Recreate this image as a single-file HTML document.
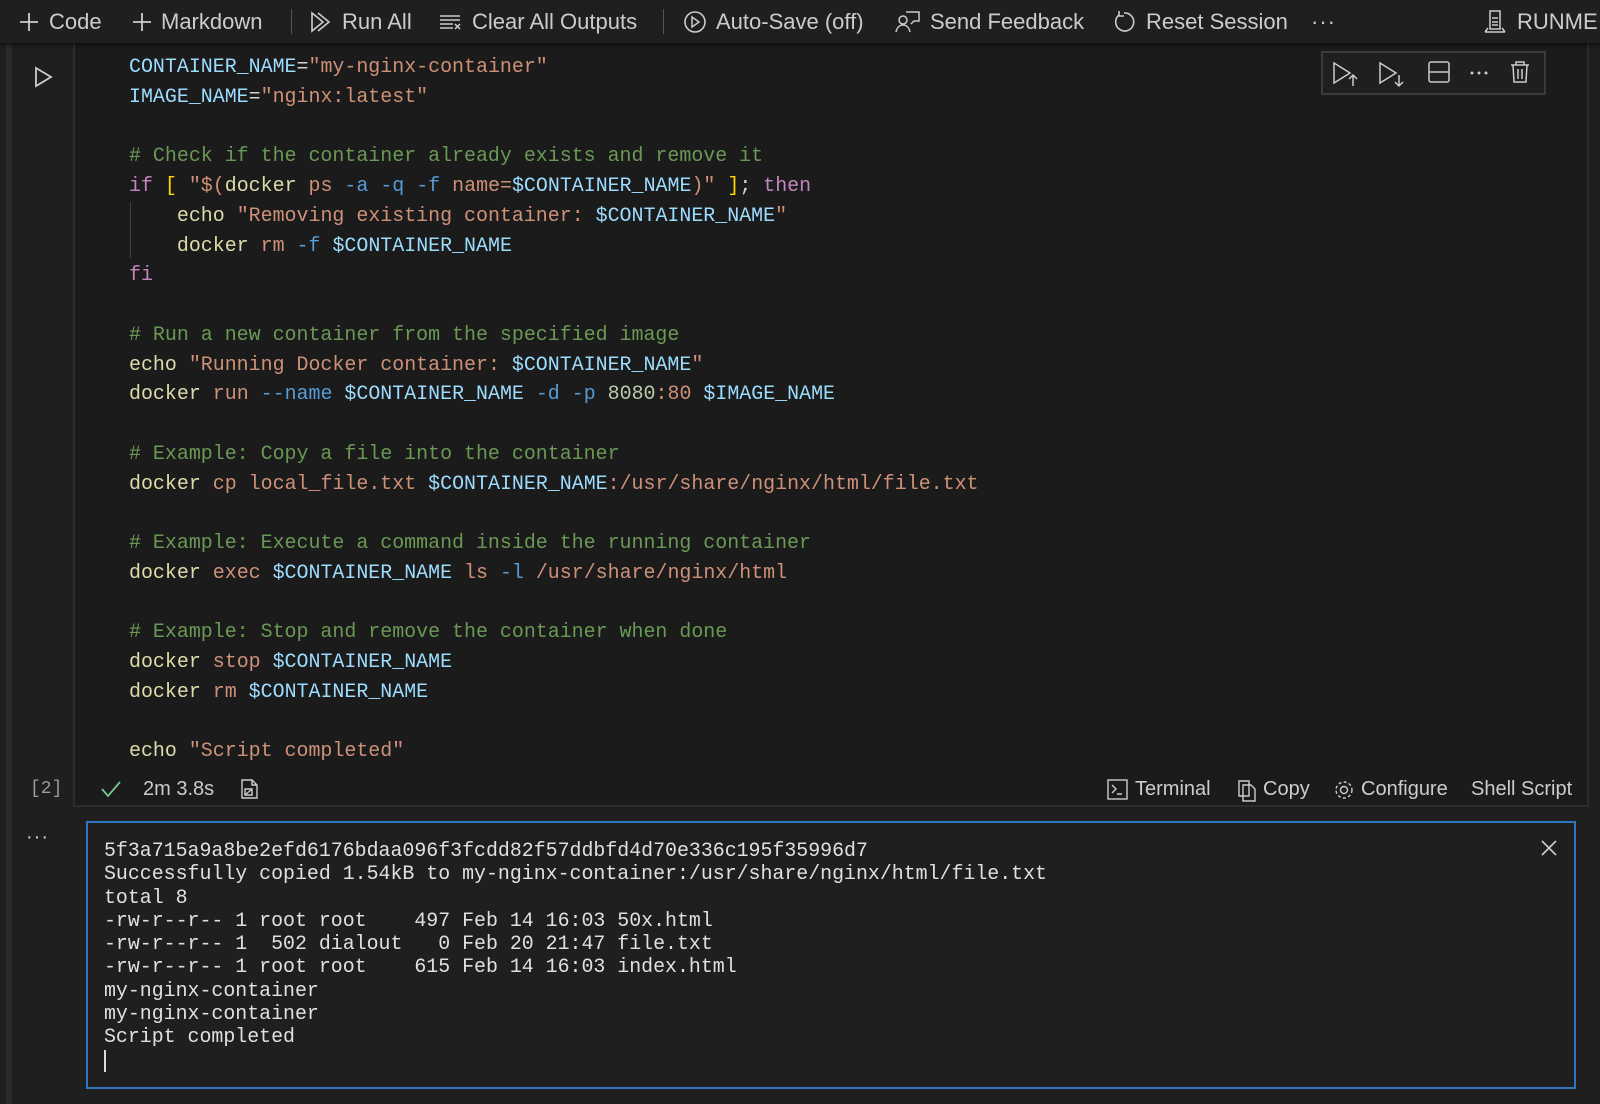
<!DOCTYPE html>
<html><head><meta charset="utf-8"><style>
*{margin:0;padding:0;box-sizing:border-box}
body{width:1600px;height:1104px;background:#1f1f1f;overflow:hidden;position:relative;font-family:"Liberation Sans",sans-serif;color:#cccccc}
.a{position:absolute}
#tb{left:0;top:0;width:1600px;height:43px;background:#1f1f1f;box-shadow:0 2px 4px rgba(0,0,0,.6);z-index:5}
.ti{position:absolute;top:0;height:44px;line-height:44px;font-size:22px;color:#cccccc;white-space:nowrap}
.ti svg{position:absolute;top:11px}
.sep{position:absolute;top:9px;width:1px;height:25px;background:#555}
#cell{left:73px;top:43px;width:1516px;height:764px;background:#1b1b1b;border-left:2px solid #2d2d2d;border-right:2px solid #2d2d2d;border-bottom:2px solid #2d2d2d}
#code{left:129px;top:52px;font-family:"Liberation Mono",monospace;font-size:19.95px;line-height:29.75px;white-space:pre;color:#d4d4d4}
.v{color:#9cdcfe}.s{color:#ce9178}.c{color:#6a9955}.f{color:#dcdcaa}.k{color:#c586c0}.o{color:#569cd6}.y{color:#ffd700}.n{color:#b5cea8}
#out{left:86px;top:821px;width:1490px;height:268px;border:2px solid #2f78c0;background:#1f1f1f}
#otext{left:104px;top:839px;font-family:"Liberation Mono",monospace;font-size:19.9px;line-height:23.3px;white-space:pre;color:#e0e0e0}
.st{position:absolute;top:775px;height:28px;line-height:28px;font-size:20px;color:#cccccc;white-space:nowrap}
</style></head><body>
<div class="a" style="left:6px;top:43px;width:6px;height:1061px;background:#2b2b2b"></div>
<div id="cell" class="a"></div>

<div id="tb" class="a">
 <div class="ti" style="left:18px"><svg width="22" height="22" viewBox="0 0 22 22" style="left:0"><path d="M11 2v18M2 11h18" stroke="#ccc" stroke-width="1.8"/></svg><span style="margin-left:31px">Code</span></div>
 <div class="ti" style="left:131px"><svg width="22" height="22" viewBox="0 0 22 22" style="left:0"><path d="M11 2v18M2 11h18" stroke="#ccc" stroke-width="1.8"/></svg><span style="margin-left:30px">Markdown</span></div>
 <div class="sep" style="left:291px"></div>
 <div class="ti" style="left:310px"><svg width="24" height="22" viewBox="0 0 24 22" style="left:0"><path d="M2 2l11 9-11 9z M8 2l11 9-11 9" fill="none" stroke="#ccc" stroke-width="1.6"/></svg><span style="margin-left:32px">Run All</span></div>
 <div class="ti" style="left:439px"><svg width="24" height="22" viewBox="0 0 24 22" style="left:0"><path d="M1 5h20M1 9h20M1 13h13M1 17h13M16 13l5 5M21 13l-5 5" fill="none" stroke="#ccc" stroke-width="1.5"/></svg><span style="margin-left:33px">Clear All Outputs</span></div>
 <div class="sep" style="left:663px"></div>
 <div class="ti" style="left:683px"><svg width="24" height="24" viewBox="0 0 24 24" style="left:0;top:10px"><circle cx="12" cy="12" r="10" fill="none" stroke="#ccc" stroke-width="1.6"/><path d="M9 7l7 5-7 5z" fill="none" stroke="#ccc" stroke-width="1.5"/></svg><span style="margin-left:33px">Auto-Save (off)</span></div>
 <div class="ti" style="left:895px"><svg width="26" height="24" viewBox="0 0 26 24" style="left:0;top:10px"><circle cx="8" cy="10" r="4" fill="none" stroke="#ccc" stroke-width="1.5"/><path d="M1 22c1-5 4-7 7-7s6 2 7 7M11 2h13v9h-5l-3 3" fill="none" stroke="#ccc" stroke-width="1.5"/></svg><span style="margin-left:35px">Send Feedback</span></div>
 <div class="ti" style="left:1112px"><svg width="24" height="24" viewBox="0 0 24 24" style="left:0;top:10px"><path d="M7 5A9 9 0 1 0 12 3M7 1v5h5" fill="none" stroke="#ccc" stroke-width="1.6"/></svg><span style="margin-left:34px">Reset Session</span></div>
 <div class="ti" style="left:1311px;font-size:22px;letter-spacing:1px">···</div>
 <div class="ti" style="left:1483px"><svg width="24" height="24" viewBox="0 0 24 24" style="left:0;top:10px"><path d="M7 1h10v18H7zM9 8h6M9 12h6M9 15h6M2 22l3-4M22 22l-3-4M2 22h20" fill="none" stroke="#ccc" stroke-width="1.5"/></svg><span style="margin-left:34px">RUNME</span></div>
</div>

<svg class="a" style="left:34px;top:66px" width="20" height="22" viewBox="0 0 20 22"><path d="M2 2l15 9-15 9z" fill="none" stroke="#cccccc" stroke-width="1.8"/></svg>

<div class="a" style="left:1321px;top:51px;width:225px;height:44px;border:2px solid #3a3a3a;background:#1f1f1f"></div>
<svg class="a" style="left:1330px;top:59px" width="210" height="30" viewBox="0 0 210 30">
 <path d="M4 4l16 10-16 10z" fill="none" stroke="#ccc" stroke-width="1.5"/><path d="M23 27V16M19 20l4-4 4 4" fill="none" stroke="#ccc" stroke-width="1.5"/>
 <path d="M50 4l16 10-16 10z" fill="none" stroke="#ccc" stroke-width="1.5"/><path d="M69 16v11M65 23l4 4 4-4" fill="none" stroke="#ccc" stroke-width="1.5"/>
 <rect x="99" y="3" width="20" height="20" rx="2" fill="none" stroke="#ccc" stroke-width="1.5"/><path d="M99 13h20" stroke="#ccc" stroke-width="1.5"/>
 <circle cx="142" cy="14" r="1.5" fill="#ccc"/><circle cx="149" cy="14" r="1.5" fill="#ccc"/><circle cx="156" cy="14" r="1.5" fill="#ccc"/>
 <path d="M181 6h18M186 6V3h8v3M183 6l1 17h12l1-17M188 10v10M192 10v10" fill="none" stroke="#ccc" stroke-width="1.5"/>
</svg>

<div class="a" style="left:130px;top:202px;width:1px;height:56px;background:#404040"></div>
<div id="code" class="a"><span class="v">CONTAINER_NAME</span>=<span class="s">"my-nginx-container"</span>
<span class="v">IMAGE_NAME</span>=<span class="s">"nginx:latest"</span>

<span class="c"># Check if the container already exists and remove it</span>
<span class="k">if</span> <span class="y">[</span> <span class="s">"$(</span><span class="f">docker</span> <span class="s">ps</span> <span class="o">-a</span> <span class="o">-q</span> <span class="o">-f</span> <span class="s">name=</span><span class="v">$CONTAINER_NAME</span><span class="s">)"</span> <span class="y">]</span>; <span class="k">then</span>
    <span class="f">echo</span> <span class="s">"Removing existing container: </span><span class="v">$CONTAINER_NAME</span><span class="s">"</span>
    <span class="f">docker</span> <span class="s">rm</span> <span class="o">-f</span> <span class="v">$CONTAINER_NAME</span>
<span class="k">fi</span>

<span class="c"># Run a new container from the specified image</span>
<span class="f">echo</span> <span class="s">"Running Docker container: </span><span class="v">$CONTAINER_NAME</span><span class="s">"</span>
<span class="f">docker</span> <span class="s">run</span> <span class="o">--name</span> <span class="v">$CONTAINER_NAME</span> <span class="o">-d</span> <span class="o">-p</span> <span class="n">8080</span><span class="s">:80</span> <span class="v">$IMAGE_NAME</span>

<span class="c"># Example: Copy a file into the container</span>
<span class="f">docker</span> <span class="s">cp</span> <span class="s">local_file.txt</span> <span class="v">$CONTAINER_NAME</span><span class="s">:/usr/share/nginx/html/file.txt</span>

<span class="c"># Example: Execute a command inside the running container</span>
<span class="f">docker</span> <span class="s">exec</span> <span class="v">$CONTAINER_NAME</span> <span class="s">ls</span> <span class="o">-l</span> <span class="s">/usr/share/nginx/html</span>

<span class="c"># Example: Stop and remove the container when done</span>
<span class="f">docker</span> <span class="s">stop</span> <span class="v">$CONTAINER_NAME</span>
<span class="f">docker</span> <span class="s">rm</span> <span class="v">$CONTAINER_NAME</span>

<span class="f">echo</span> <span class="s">"Script completed"</span></div>

<div class="st" style="left:30px;font-family:'Liberation Mono',monospace;font-size:18px;color:#999">[2]</div>
<svg class="a" style="left:100px;top:780px" width="22" height="18" viewBox="0 0 22 18"><path d="M2 9l6 7L20 2" fill="none" stroke="#73c991" stroke-width="1.8"/></svg>
<div class="st" style="left:143px">2m 3.8s</div>
<svg class="a" style="left:238px;top:778px" width="22" height="22" viewBox="0 0 22 22"><path d="M4 2h10l5 5v13H4zM14 2v5h5M7 11h7v6H7zM8 16l5-4" fill="none" stroke="#ccc" stroke-width="1.4"/></svg>
<svg class="a" style="left:1107px;top:779px" width="22" height="22" viewBox="0 0 22 22"><rect x="1" y="1" width="19" height="19" fill="none" stroke="#ccc" stroke-width="1.4"/><path d="M5 6l4 4-4 4M10 15h5" fill="none" stroke="#ccc" stroke-width="1.4"/></svg>
<div class="st" style="left:1135px">Terminal</div>
<svg class="a" style="left:1236px;top:778px" width="22" height="24" viewBox="0 0 22 24"><path d="M3 3h10v15H3zM7 7h8l4 4v12H7z" fill="none" stroke="#ccc" stroke-width="1.4"/></svg>
<div class="st" style="left:1263px">Copy</div>
<svg class="a" style="left:1333px;top:779px" width="22" height="22" viewBox="0 0 22 22"><circle cx="11" cy="11" r="3.5" fill="none" stroke="#ccc" stroke-width="1.4"/><circle cx="11" cy="11" r="8" fill="none" stroke="#ccc" stroke-width="1.4" stroke-dasharray="3 2.3"/></svg>
<div class="st" style="left:1361px">Configure</div>
<div class="st" style="left:1471px">Shell Script</div>

<div class="a" style="left:26px;top:826px;font-size:20px;color:#ccc;letter-spacing:1px">···</div>
<div id="out" class="a"></div>
<svg class="a" style="left:1541px;top:840px" width="16" height="16" viewBox="0 0 16 16"><path d="M1 1l14 14M15 1L1 15" stroke="#ccc" stroke-width="1.6"/></svg>
<div id="otext" class="a">5f3a715a9a8be2efd6176bdaa096f3fcdd82f57ddbfd4d70e336c195f35996d7
Successfully copied 1.54kB to my-nginx-container:/usr/share/nginx/html/file.txt
total 8
-rw-r--r-- 1 root root    497 Feb 14 16:03 50x.html
-rw-r--r-- 1  502 dialout   0 Feb 20 21:47 file.txt
-rw-r--r-- 1 root root    615 Feb 14 16:03 index.html
my-nginx-container
my-nginx-container
Script completed</div>
<div class="a" style="left:104px;top:1050px;width:2px;height:22px;background:#ddd"></div>
</body></html>
